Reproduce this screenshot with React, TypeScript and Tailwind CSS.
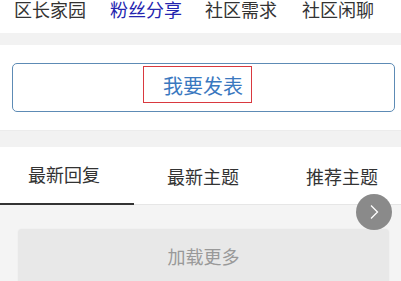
import React from "react";

const font = { fontFamily: '"Noto Sans CJK SC", "Noto Sans", sans-serif' };

export default function App() {
  return (
    <div className="w-[401px] h-[281px] overflow-hidden bg-[#f4f4f4] relative" style={font}>
      {/* top nav */}
      <div className="h-[33px] bg-white">
        <div className="flex text-[18px] leading-[18px] text-[#333] pl-[14px]">
          <span className="w-[96px]">区长家园</span>
          <span className="w-[95px] text-[#2424b0]">粉丝分享</span>
          <span className="w-[97px]">社区需求</span>
          <span>社区闲聊</span>
        </div>
      </div>
      <div className="h-[12px] bg-[#f2f2f2]" />
      {/* publish button section */}
      <div className="h-[85px] bg-white pt-[18px] pl-[12px] pr-[6px]">
        <div className="h-[49px] border border-[#5d8bb5] rounded-[5px] flex items-start pt-[2px] pl-[130px]">
          <div className="w-[109px] h-[37px] border border-[#d9393f] flex items-center pl-[19px] pt-[2px] text-[20px] leading-[20px] text-[#3a78bf]">
            我要发表
          </div>
        </div>
      </div>
      <div className="h-[17px] bg-[#f2f2f2] border-t border-[#ececec]" />
      {/* tabs */}
      <div className="h-[58px] bg-white flex border-b border-[#e6e6e6] text-[18px] leading-[18px] text-[#333]">
        <div className="w-[134px] flex items-center pl-[28px] pb-[2px] border-b-2 border-[#333] -mb-[1px]">最新回复</div>
        <div className="w-[139px] flex items-center pl-[33px]">最新主题</div>
        <div className="flex-1 flex items-center pl-[33px]">推荐主题</div>
      </div>
      {/* load more */}
      <div className="pl-[18px] pr-[12px] pt-[24px]">
        <div className="h-[70px] bg-[#e8e8e8] rounded-[4px] shadow-[0_0_2px_rgba(0,0,0,0.06)] flex justify-center pt-[18px] text-[18px] leading-[18px] text-[#999]">
          加载更多
        </div>
      </div>
      {/* floating arrow */}
      <div className="absolute left-[356px] top-[194px] w-[36px] h-[36px] rounded-full bg-[#8a8a8a] flex items-center justify-center">
        <svg width="12" height="16" viewBox="0 0 12 16" fill="none">
          <path d="M3 1.5 L9.5 8 L3 14.5" stroke="white" strokeWidth="1.3" />
        </svg>
      </div>
    </div>
  );
}
